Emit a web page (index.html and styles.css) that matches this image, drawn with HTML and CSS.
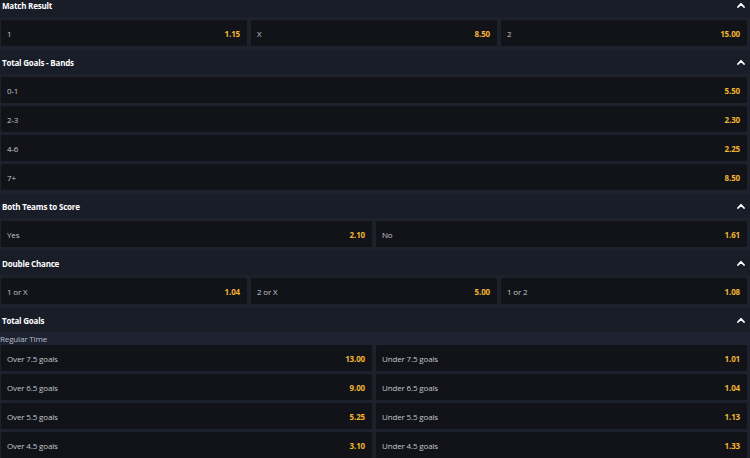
FILE: index.html
```html
<!DOCTYPE html>
<html>
<head>
<meta charset="utf-8">
<link rel="stylesheet" href="styles.css">
</head>
<body>
<div class="page">

  <section class="market">
    <div class="market-head"><span>Match Result</span><svg class="chev" viewBox="0 0 8 6"><path d="M1 5 L4 1.8 L7 5"/></svg></div>
    <div class="market-body cols-3">
      <div class="sel"><span class="lbl">1</span><span class="odd">1.15</span></div>
      <div class="sel"><span class="lbl">X</span><span class="odd">8.50</span></div>
      <div class="sel"><span class="lbl">2</span><span class="odd">15.00</span></div>
    </div>
  </section>

  <section class="market">
    <div class="market-head"><span>Total Goals - Bands</span><svg class="chev" viewBox="0 0 8 6"><path d="M1 5 L4 1.8 L7 5"/></svg></div>
    <div class="market-body cols-1">
      <div class="sel"><span class="lbl">0-1</span><span class="odd">5.50</span></div>
      <div class="sel"><span class="lbl">2-3</span><span class="odd">2.30</span></div>
      <div class="sel"><span class="lbl">4-6</span><span class="odd">2.25</span></div>
      <div class="sel"><span class="lbl">7+</span><span class="odd">8.50</span></div>
    </div>
  </section>

  <section class="market">
    <div class="market-head"><span>Both Teams to Score</span><svg class="chev" viewBox="0 0 8 6"><path d="M1 5 L4 1.8 L7 5"/></svg></div>
    <div class="market-body cols-2">
      <div class="sel"><span class="lbl">Yes</span><span class="odd">2.10</span></div>
      <div class="sel"><span class="lbl">No</span><span class="odd">1.61</span></div>
    </div>
  </section>

  <section class="market">
    <div class="market-head"><span>Double Chance</span><svg class="chev" viewBox="0 0 8 6"><path d="M1 5 L4 1.8 L7 5"/></svg></div>
    <div class="market-body cols-3">
      <div class="sel"><span class="lbl">1 or X</span><span class="odd">1.04</span></div>
      <div class="sel"><span class="lbl">2 or X</span><span class="odd">5.00</span></div>
      <div class="sel"><span class="lbl">1 or 2</span><span class="odd">1.08</span></div>
    </div>
  </section>

  <section class="market">
    <div class="market-head"><span>Total Goals</span><svg class="chev" viewBox="0 0 8 6"><path d="M1 5 L4 1.8 L7 5"/></svg></div>
    <div class="sub-head">Regular Time</div>
    <div class="market-body cols-2 flush">
      <div class="sel"><span class="lbl">Over 7.5 goals</span><span class="odd">13.00</span></div>
      <div class="sel"><span class="lbl">Under 7.5 goals</span><span class="odd">1.01</span></div>
      <div class="sel"><span class="lbl">Over 6.5 goals</span><span class="odd">9.00</span></div>
      <div class="sel"><span class="lbl">Under 6.5 goals</span><span class="odd">1.04</span></div>
      <div class="sel"><span class="lbl">Over 5.5 goals</span><span class="odd">5.25</span></div>
      <div class="sel"><span class="lbl">Under 5.5 goals</span><span class="odd">1.13</span></div>
      <div class="sel"><span class="lbl">Over 4.5 goals</span><span class="odd">3.10</span></div>
      <div class="sel"><span class="lbl">Under 4.5 goals</span><span class="odd">1.33</span></div>
    </div>
  </section>

</div>
</body>
</html>
```

FILE: styles.css
```css
html, body {
  margin: 0;
  padding: 0;
  background: #181d27;
  overflow: hidden;
}

body {
  font-family: "Open Sans", "Noto Sans", sans-serif;
  font-size: 8px;
  letter-spacing: -0.15px;
}

.page {
  margin-top: -7px;
}

.market-head {
  height: 24px;
  display: flex;
  align-items: center;
  justify-content: space-between;
  padding: 0 5px 0 2px;
  background: #181d27;
  color: #ffffff;
  font-weight: 700;
  font-size: 8px;
  letter-spacing: -0.2px;
}

.chev {
  width: 8px;
  height: 6px;
  fill: none;
  stroke: #ffffff;
  stroke-width: 1.8;
  stroke-linecap: round;
  stroke-linejoin: round;
}

.sub-head {
  height: 13px;
  display: flex;
  align-items: center;
  padding-left: 0;
  background: #1e2331;
  color: #b8bcc8;
}

.market-body {
  display: grid;
  gap: 3px 4px;
  padding: 3px 3px 4px 1px;
  background: #1d212b;
}

.cols-1 { grid-template-columns: 1fr; }
.cols-2 { grid-template-columns: 1fr 1fr; }
.cols-3 { grid-template-columns: 1fr 1fr 1fr; }

.market-body.flush {
  padding-top: 0;
}

.sel {
  height: 26px;
  display: flex;
  align-items: center;
  justify-content: space-between;
  padding: 0 7px 0 6px;
  background: #111318;
  border-radius: 1px;
}

.lbl {
  color: #c3c6ce;
}

.odd {
  color: #f2b530;
  font-weight: 700;
}
```
